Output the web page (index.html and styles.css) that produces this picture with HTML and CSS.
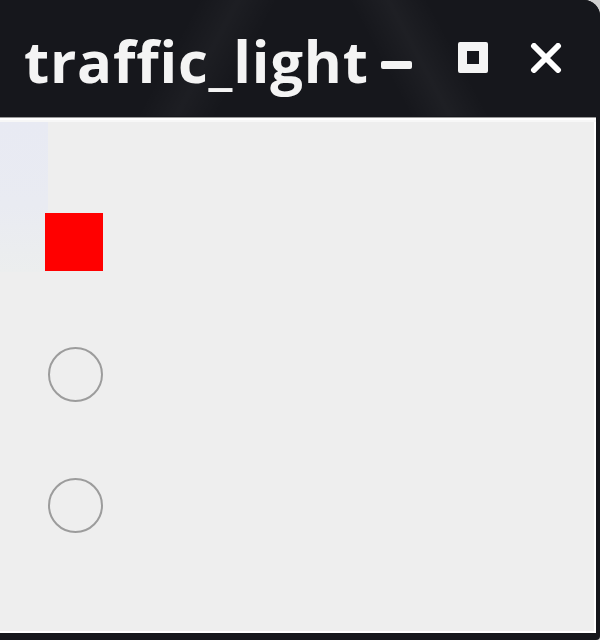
FILE: index.html
```html
<!DOCTYPE html>
<html>
<head>
<meta charset="utf-8">
<title>traffic_light</title>
<link rel="stylesheet" href="styles.css">
</head>
<body>
<div class="frame">
  <header class="titlebar">
    <span class="title">traffic_light</span>
    <div class="controls">
      <span class="btn btn-min"></span>
      <span class="btn btn-max"></span>
      <svg class="btn-close" width="32" height="30" viewBox="0 0 32 30">
        <path d="M4 3 L28 27 M28 3 L4 27" stroke="#ffffff" stroke-width="6" stroke-linecap="round"/>
      </svg>
    </div>
  </header>
  <div class="divider"></div>
  <main class="content">
    <div class="panel-tint"></div>
    <div class="lights">
      <div class="light light-red"></div>
      <div class="light light-off"></div>
      <div class="light light-off"></div>
    </div>
  </main>
</div>
</body>
</html>
```

FILE: styles.css
```css
html, body {
  margin: 0;
  padding: 0;
}
body {
  width: 600px;
  height: 640px;
  background: #cfcfcf;
  overflow: hidden;
}
.frame {
  width: 600px;
  height: 640px;
  background: #16171c;
  border-top-right-radius: 16px;
  border-bottom-right-radius: 4px;
  display: flex;
  flex-direction: column;
  overflow: hidden;
}
.titlebar {
  height: 116px;
  flex: none;
  display: flex;
  align-items: center;
  padding-left: 24px;
  padding-right: 34px;
  box-sizing: border-box;
  background:
    linear-gradient(118deg, rgba(255,255,255,0) 30%, rgba(255,255,255,0.03) 36%, rgba(255,255,255,0) 42%),
    linear-gradient(62deg, rgba(255,255,255,0) 62%, rgba(255,255,255,0.035) 68%, rgba(255,255,255,0) 74%),
    #16171c;
}
.title {
  font-family: "Open Sans", sans-serif;
  font-weight: 700;
  font-size: 58px;
  color: #f4f4f4;
  letter-spacing: 0.8px;
  line-height: 1;
  margin-top: 6px;
}
.controls {
  display: flex;
  align-items: center;
  margin-left: 12px;
  flex: 1;
}
.btn-min {
  width: 31px;
  height: 8px;
  background: #f4f4f4;
  border-radius: 2px;
  margin-top: 14px;
}
.btn-max {
  width: 30px;
  height: 31px;
  box-sizing: border-box;
  border: 9px solid #f4f4f4;
  border-radius: 2px;
  margin-left: 46px;
  margin-top: -2px;
}
.btn-close {
  margin-left: 42px;
  display: block;
}
.divider {
  height: 6px;
  flex: none;
  background: linear-gradient(#16171c 0, #16171c 1px, #9a9a9a 1px, #9a9a9a 2px, #ffffff 2px, #ffffff 4px, #f7f7f7 4px, #f7f7f7 6px);
  margin-right: 4px;
}
.content {
  flex: 1;
  background: #eeeeee;
  margin-right: 4px;
  margin-bottom: 7px;
  border-right: 2px solid #ffffff;
  border-bottom: 2px solid #ffffff;
  position: relative;
}
.panel-tint {
  position: absolute;
  left: 0;
  top: 0;
  width: 48px;
  height: 150px;
  background: linear-gradient(#e8eaf3 0, #e9ebf2 55%, #eceeee 100%);
}
.lights {
  position: relative;
  display: flex;
  flex-direction: column;
  align-items: flex-start;
  padding-left: 45px;
  padding-top: 91px;
  gap: 76px;
}
.light {
  width: 58px;
  height: 58px;
  box-sizing: border-box;
}
.light-red {
  background: #ff0000;
}
.light-off {
  width: 55px;
  height: 55px;
  margin-left: 3px;
  border: 2px solid #9c9c9c;
  border-radius: 50%;
}
```
